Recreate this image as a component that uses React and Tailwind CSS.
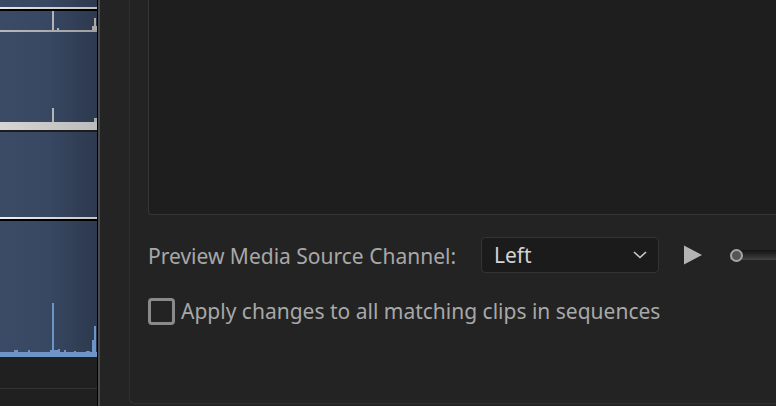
const font = { fontFamily: '"Noto Sans", "Open Sans", sans-serif' };

const Blue = ({ className = '', children }) => (
  <div className={`relative bg-gradient-to-r from-[#3b4b66] via-[#384762] to-[#2c394e] ${className}`}>{children}</div>
);

function Track() {
  return (
    <div className="flex flex-col w-[98px] shrink-0 border-r border-black">
      <Blue className="h-[7px]" />
      <div className="h-[2px] bg-gradient-to-r from-[#e8e8e8] to-[#bdbdbd]" />
      <div className="h-[2px] bg-black" />
      <Blue className="h-[19px]">
        <svg width="97" height="19" className="absolute inset-0">
          <rect x="52" y="0" width="2" height="19" fill="#b4b4b4" />
          <rect x="57" y="17" width="2" height="2" fill="#b4b4b4" />
          <rect x="92" y="15" width="5" height="4" fill="#a8a8a8" />
          <rect x="94" y="7" width="2" height="12" fill="#a8a8a8" />
        </svg>
      </Blue>
      <div className="h-[2px] bg-gradient-to-r from-[#b8b8b8] to-[#a0a0a0]" />
      <Blue className="h-[90px]">
        <svg width="97" height="90" className="absolute inset-0">
          <rect x="52" y="76" width="2" height="14" fill="#b4b4b4" />
          <rect x="94" y="86" width="3" height="4" fill="#a8a8a8" />
        </svg>
      </Blue>
      <div className="h-[8px] bg-gradient-to-r from-[#d6d6d6] via-[#c8c8c8] to-[#bcbcbc]" />
      <div className="h-[2px] bg-[#1c1c1c]" />
      <Blue className="h-[85px]" />
      <div className="h-[2px] bg-gradient-to-r from-[#f0f0f0] to-[#c4c4c4]" />
      <div className="h-[2px] bg-black" />
      <Blue className="h-[136px]">
        <svg width="97" height="136" className="absolute inset-0">
          <g fill="#6d94c6">
            <rect x="0" y="131" width="97" height="5" />
            <rect x="14" y="129" width="4" height="2" />
            <rect x="28" y="129" width="2" height="2" />
            <rect x="50" y="129" width="10" height="2" />
            <rect x="58" y="128" width="2" height="1" />
            <rect x="64" y="129" width="2" height="2" />
            <rect x="74" y="130" width="2" height="1" />
            <rect x="86" y="130" width="4" height="1" />
            <rect x="52" y="82" width="2" height="49" />
            <rect x="92" y="119" width="2" height="12" />
            <rect x="94" y="105" width="2" height="26" />
          </g>
        </svg>
      </Blue>
      <div className="flex-1 bg-[#202020] flex flex-col">
        <div className="h-[31px]" />
        <div className="h-px bg-[#323232]" />
      </div>
    </div>
  );
}

export default function App() {
  return (
    <div className="w-[776px] h-[406px] overflow-hidden flex bg-[#242424]" style={font}>
      <Track />
      <div className="w-[2px] shrink-0 bg-[#4a4a4a]" />
      <div className="flex-1 min-w-0 pl-[29px]">
        <div className="h-[404px] border-l border-b border-[#303030] rounded-bl-md bg-[#232323] pl-[18px] flex flex-col">
          <div className="h-[215px] shrink-0 bg-[#1e1e1e] border-l border-b border-[#353535] rounded-bl-[3px]" />
          <div className="flex items-center mt-[22px] h-[36px]">
            <div className="w-[333px] shrink-0 pt-[3px] text-[21px] text-[#a8a8a8] whitespace-nowrap">
              Preview Media Source Channel:
            </div>
            <div className="w-[178px] h-[36px] shrink-0 rounded-[4px] bg-[#1b1b1b] border border-[#343434] flex items-center justify-between pl-[12px] pr-[10px]">
              <span className="pt-[2px] text-[21px] text-[#d4d4d4]">Left</span>
              <svg width="16" height="10" viewBox="0 0 16 10">
                <path d="M2 2 L8 7.5 L14 2" fill="none" stroke="#c8c8c8" strokeWidth="1.6" />
              </svg>
            </div>
            <svg width="20" height="20" viewBox="0 0 20 20" className="ml-[24px] shrink-0">
              <path d="M1 0.5 L19 10 L1 19.5 Z" fill="#b4b4b4" />
            </svg>
            <div className="ml-[27px] flex-1 relative h-[12px] flex items-center">
              <div className="absolute left-0 right-0 top-[1px] h-[10px] bg-gradient-to-b from-[#141414] via-[#2a2a2a] to-[#444]" />
              <div className="relative w-[13px] h-[13px] rounded-full border-2 border-[#a6a6a6] bg-[#555]" />
            </div>
          </div>
          <div className="flex items-center mt-[23px]">
            <div className="w-[27px] h-[27px] shrink-0 rounded-[4px] border-[3px] border-[#8a8a8a]" />
            <span className="ml-[6px] text-[21px] text-[#a8a8a8] whitespace-nowrap">
              Apply changes to all matching clips in sequences
            </span>
          </div>
        </div>
      </div>
    </div>
  );
}
